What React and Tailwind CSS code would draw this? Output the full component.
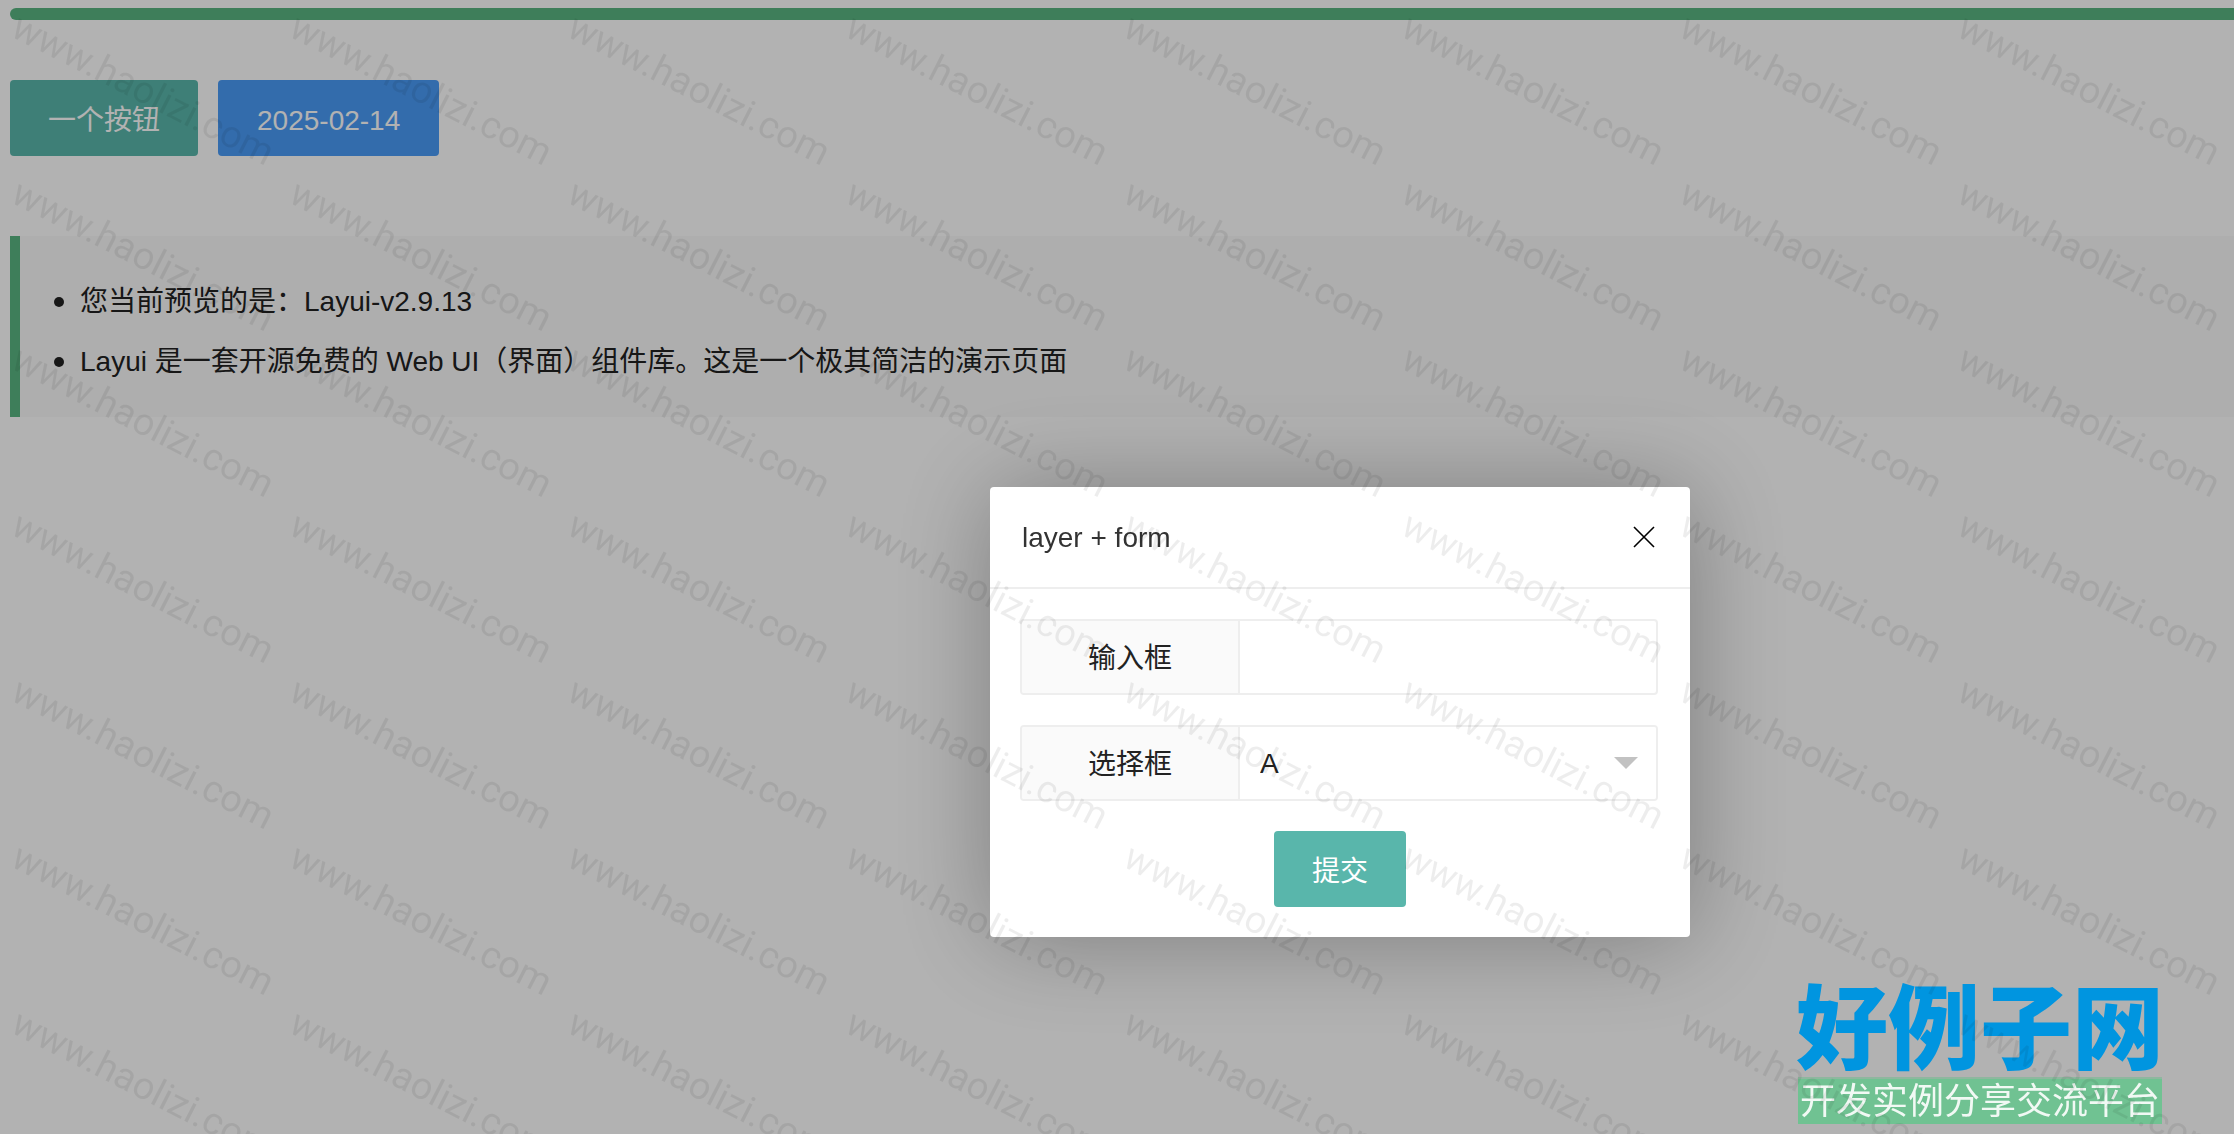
import React, { useState } from "react";

const Watermark = () => {
  return (
    <div aria-hidden="true" className="pointer-events-none fixed inset-0 z-40 grid grid-cols-[repeat(auto-fill,278px)] auto-rows-[166px] overflow-hidden">
      {[...Array(56)].map((_, index) => (
        <div key={index} className="pt-1.5 pl-6">
          <span className="block w-max origin-top-left rotate-27 font-[Roboto,sans-serif] text-[38px] leading-10 text-black/7">www.haolizi.com</span>
        </div>
      ))}
    </div>
  );
};

const SiteLogo = () => {
  return (
    <a href="#home" className="fixed right-[70px] bottom-[10px] z-30 flex flex-col items-center">
      <span className="text-[92px] leading-[94px] font-black text-[#0095e0]">好例子网</span>
      <span className="border-t-2 border-[#8fb79f] bg-[#70c292] px-[2px] text-[36px] leading-[45px] text-white/90">开发实例分享交流平台</span>
    </a>
  );
};

const FormLayer = ({ onClose }) => {
  const [text, setText] = useState("");
  const [choice, setChoice] = useState("A");

  return (
    <div role="dialog" aria-labelledby="layer-title" className="fixed top-[487px] left-[990px] z-20 w-[700px] rounded-sm bg-white shadow-[2px_2px_100px_rgba(0,0,0,0.3)]">
      {/* Title bar */}
      <div className="flex h-[102px] items-center justify-between border-b-2 border-[#eeeeee] px-8">
        <h2 id="layer-title" className="pt-0.5 text-[#333333]">layer + form</h2>
        <button type="button" aria-label="关闭" onClick={onClose} className="p-1">
          <svg viewBox="0 0 20 20" className="size-5 overflow-visible" fill="none" stroke="black" strokeWidth="1.6">
            <path d="M0 0L20 20M20 0L0 20" />
          </svg>
        </button>
      </div>

      {/* Form */}
      <form className="flex flex-col gap-[30px] py-[30px]" onSubmit={(e) => e.preventDefault()}>
        <div className="mr-8 ml-[30px] flex h-[76px] overflow-hidden rounded-sm border-2 border-[#eeeeee]">
          <label htmlFor="field-text" className="flex w-[218px] items-center justify-center border-r-2 border-[#eeeeee] bg-[#fafafa] pt-1">输入框</label>
          <input id="field-text" type="text" value={text} onChange={(e) => setText(e.target.value)} className="min-w-0 flex-1 px-5 outline-none" />
        </div>

        <div className="mr-8 ml-[30px] flex h-[76px] overflow-hidden rounded-sm border-2 border-[#eeeeee]">
          <label htmlFor="field-choice" className="flex w-[218px] items-center justify-center border-r-2 border-[#eeeeee] bg-[#fafafa] pt-1">选择框</label>
          <div className="relative flex min-w-0 flex-1">
            <select id="field-choice" value={choice} onChange={(e) => setChoice(e.target.value)} className="w-full appearance-none bg-white px-5 pt-0.5 outline-none">
              <option>A</option>
              <option>B</option>
              <option>C</option>
            </select>
            <svg viewBox="0 0 24 12" className="pointer-events-none absolute top-[30px] right-[18px] h-3 w-6" fill="#c2c2c2">
              <path d="M0 0H24L12 12Z" />
            </svg>
          </div>
        </div>

        <div className="flex justify-center">
          <button type="submit" className="h-[76px] rounded-sm bg-[#59b6ab] px-[38px] pt-1.5 text-white">提交</button>
        </div>
      </form>
    </div>
  );
};

const App = () => {
  const [open, setOpen] = useState(true);

  return (
    <div className="min-h-screen overflow-hidden bg-white pt-2 pl-[10px] font-['Liberation_Sans','Noto_Sans_CJK_SC',sans-serif] text-[28px] leading-[60px] text-[#222222]">
      <div className="h-3 rounded-l-full bg-[#5ab581]" />

      {/* Buttons */}
      <div className="mt-[60px] flex gap-5">
        <button type="button" onClick={() => setOpen(true)} className="h-[76px] rounded-sm bg-[#59b6ab] px-[38px] pt-1.5 text-white">一个按钮</button>
        <button type="button" className="h-[76px] rounded-sm bg-[#4a9bf7] px-[39px] pt-1.5 text-white">2025-02-14</button>
      </div>

      {/* Notice */}
      <blockquote className="mt-20 border-l-10 border-[#5ab581] bg-[#fafafa] pt-[34px] pb-[27px] pl-[60px]">
        <ul className="list-disc marker:text-[32px]">
          <li className="h-[60px]">您当前预览的是：Layui-v2.9.13</li>
          <li className="h-[60px]">Layui 是一套开源免费的 Web UI（界面）组件库。这是一个极其简洁的演示页面</li>
        </ul>
      </blockquote>

      {open && <div className="fixed inset-0 z-10 bg-black/30" />}
      {open && <FormLayer onClose={() => setOpen(false)} />}
      <SiteLogo />
      <Watermark />
    </div>
  );
};

export default App;
